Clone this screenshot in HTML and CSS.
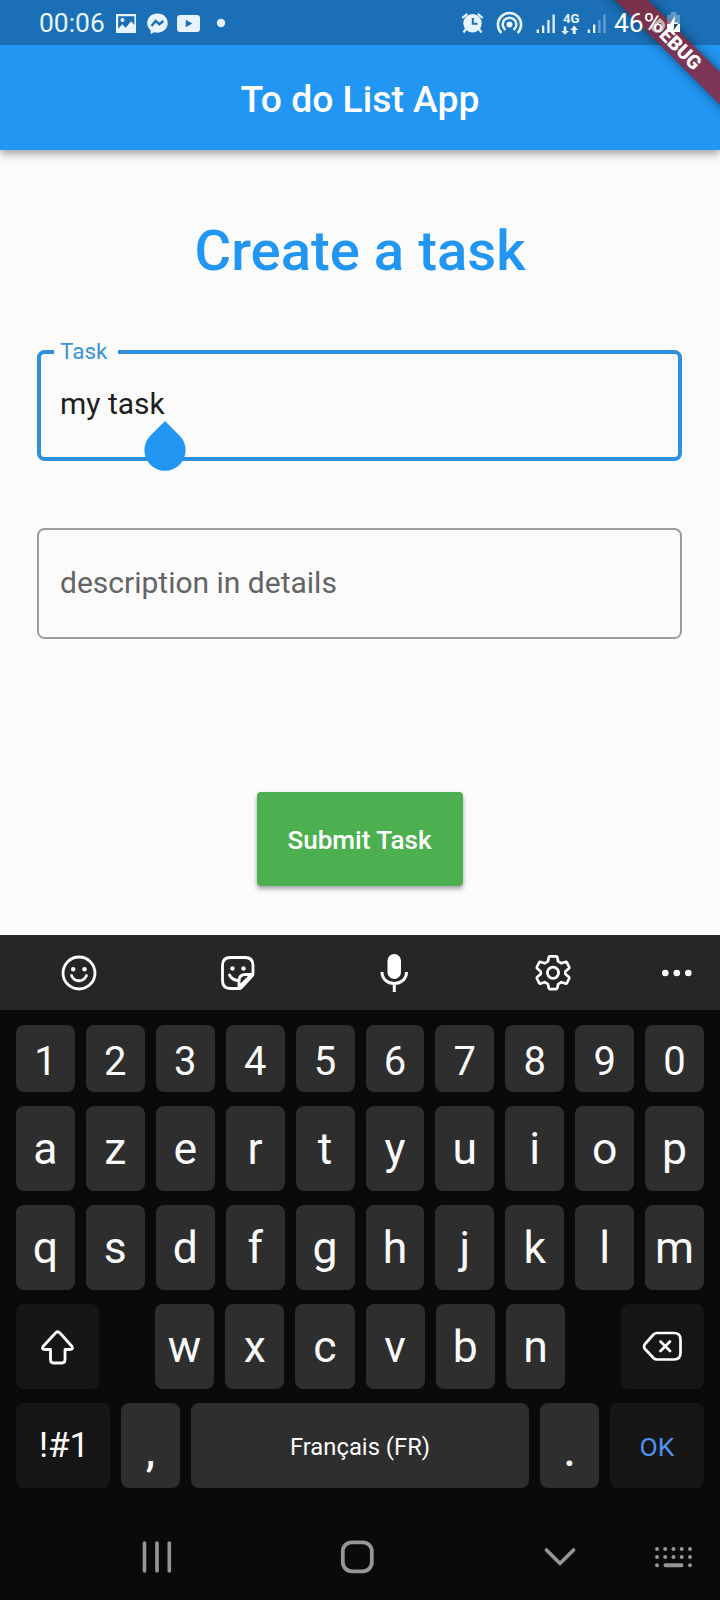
FILE: index.html
```html
<!DOCTYPE html>
<html lang="en">
<head>
<meta charset="utf-8">
<title>To do List App</title>
<link rel="stylesheet" href="styles.css">
</head>
<body>
<div class="phone">
  <header class="appbar">
    <h1 class="appbar-title">To do List App</h1>
  </header>
  <div class="banner-clip"><div class="banner"><span class="dim">D</span>EBUG</div></div>
  <div class="status">
    <span class="clock">00:06</span>
    <svg class="status-left" width="116" height="24" viewBox="112 10 116 24" fill="#e8f4fd">
      <path fill-rule="evenodd" d="M116 13h20v19h-20zM118.200 15.200v12.500l4-4.500 3.600 3.500 5.200-6.500 3.400 3.600v-8.600z"/>
      <circle cx="122.500" cy="19" r="2"/>
      <path d="M157.500 12.500c-6 0-10.300 4.200-10.300 9.600 0 3 1.300 5.500 3.400 7.300l.1 3.700 3.600-1.900c1 .3 2 .5 3.200.5 6 0 10.200-4.200 10.200-9.600s-4.200-9.600-10.200-9.600z"/>
      <path d="M151.500 25l4.200-5 3.600 3.200 4-3.200" fill="none" stroke="#1a6fb6" stroke-width="2.300"/>
      <path fill-rule="evenodd" d="M180 14q-3 0-3 3.500v10q0 3.500 3 3.500h17q3 0 3-3.500v-10q0-3.500-3-3.500zM185.800 18.800l6.400 3.700-6.400 3.700z"/>
      <circle cx="221" cy="22" r="4.200"/>
    </svg>
    <svg class="status-right" width="146" height="24" viewBox="460 10 146 24" fill="#e8f4fd">
      <circle cx="472.500" cy="22.200" r="9.200"/>
      <path d="M462.300 17l5-4.200M482.700 17l-5-4.200M466 28l-2.500 3.500M479 28l2.500 3.500" stroke="#e8f4fd" stroke-width="2.200"/>
      <path d="M472.800 17v5.800h4.600" fill="none" stroke="#1a6fb6" stroke-width="2"/>
      <circle cx="509.500" cy="23.500" r="3"/>
      <path d="M505.500 29a6.800 6.800 0 1 1 8 0M501.500 32a11.600 11.600 0 1 1 16 0" fill="none" stroke="#e8f4fd" stroke-width="2.600"/>
      <path d="M536.700 28.500h2.300V32h-2.300zM542 24.500h2.300V32H542zM547.300 19h2.300v13h-2.300zM552.500 13.500h2.300V32h-2.300z"/>
      <path d="M566.300 25.500v4.500h2.600l-3.900 3.800-3.900-3.800h2.600v-4.500zM572.700 33v-4h-2.400l3.900-4.500 3.900 4.500h-2.400V33z"/>
      <path d="M587.700 28.500h2.300V32h-2.300zM593 23.500h2.300V32H593z"/>
      <path d="M598.300 19h2.300v13h-2.300zM603.300 13.500h2.300V32h-2.300z" opacity=".38"/>
      <text class="net" x="563" y="22">4G</text>
    </svg>
    <span class="percent">46%</span>
    <svg class="battery" width="15" height="21" viewBox="0 0 15 21">
      <path d="M1 3h3.500V0h6v3H14v9H1z" fill="#fff" opacity=".3"/>
      <path d="M1 12h13v8H1z" fill="#fff"/>
      <path d="M9 4L3.500 12.500H8l-1 6 5.500-8H8.500z" fill="#fff"/>
      <path d="M8 12h4l-4.500 6.500.7-4.500z" fill="#16466f"/>
    </svg>
  </div>

  <main class="content">
    <h2 class="heading">Create a task</h2>
    <div class="field focused">
      <span class="label">Task</span>
      <span class="value">my task</span>
      <svg class="handle" width="42" height="50" viewBox="0 0 42 50"><path d="M21 0L35.500 14.500A20.600 20.600 0 1 1 6.500 14.500z" fill="#2196f3"/></svg>
    </div>
    <div class="field"><span class="hint">description in details</span></div>
    <button class="submit">Submit Task</button>
  </main>

  <section class="keyboard">
    <div class="tools">
      <svg width="38" height="38" viewBox="0 0 38 38" fill="none" stroke="#fff" stroke-width="2.800" stroke-linecap="round">
        <circle cx="19" cy="19" r="16"/><path d="M11.500 21.500c3 7 12 7 15 0"/>
        <g fill="#fff" stroke="none"><circle cx="13.200" cy="15.300" r="2.200"/><circle cx="24.500" cy="15.300" r="2.200"/></g>
      </svg>
      <svg width="38" height="38" viewBox="0 0 38 38" fill="none" stroke="#fff" stroke-width="2.800" stroke-linecap="round" stroke-linejoin="round">
        <path d="M21 34.500h-9.500q-8 0-8-8v-15q0-8 8-8H26q8 0 8 8V20q0 1-1 2L22.500 33.500q-.7 1-1.500 1zM20 33.500V27q0-6.500 6.500-6.500h7M10.500 21q2.500 5 8.500 5.500M22 31l9-9"/>
        <g fill="#fff" stroke="none"><circle cx="13.500" cy="14.500" r="2.200"/><circle cx="24.500" cy="14.500" r="2.200"/></g>
      </svg>
      <svg class="mic" width="38" height="40" viewBox="0 0 38 40">
        <rect x="12.500" y="1" width="13.500" height="25" rx="6.700" fill="#fff"/>
        <path d="M7 19c0 7 5.500 11.500 12.200 11.500S31.500 26 31.500 19M19.300 30.500V39" fill="none" stroke="#fff" stroke-width="3"/>
      </svg>
      <svg width="38" height="38" viewBox="0 0 38 38" fill="none" stroke="#fff" stroke-width="2.800" stroke-linejoin="round">
        <path transform="translate(.8 .5) scale(.96)" d="M15.700 2h6.600q1 0 1.200 1l.8 4.200 3.400 2 4.200-1.500q1-.3 1.500.5l2.400 4.800q.4 1-.3 1.600L31.800 17.800v2.400l3.700 3.200q.7.600.3 1.600l-2.400 4.800q-.5.800-1.500.5l-4.200-1.500-3.400 2-.8 4.200q-.2 1-1.200 1h-6.600q-1 0-1.200-1l-.8-4.200-3.400-2-4.200 1.500q-1 .3-1.500-.5L2.200 25q-.4-1 .3-1.600l3.700-3.200v-2.400l-3.700-3.200q-.7-.6-.3-1.600l2.400-4.800q.5-.8 1.500-.5l4.200 1.500 3.400-2 .8-4.200q.2-1 1.200-1z"/><circle cx="19" cy="18.700" r="5.600"/>
      </svg>
      <svg width="34" height="10" viewBox="0 0 34 10" fill="#fff"><circle cx="5.300" cy="5" r="3.300"/><circle cx="16.800" cy="5" r="3.300"/><circle cx="28.300" cy="5" r="3.300"/></svg>
    </div>
    <div class="keys">
      <div class="row digits"><kbd>1</kbd><kbd>2</kbd><kbd>3</kbd><kbd>4</kbd><kbd>5</kbd><kbd>6</kbd><kbd>7</kbd><kbd>8</kbd><kbd>9</kbd><kbd>0</kbd></div>
      <div class="row"><kbd>a</kbd><kbd>z</kbd><kbd>e</kbd><kbd>r</kbd><kbd>t</kbd><kbd>y</kbd><kbd>u</kbd><kbd>i</kbd><kbd>o</kbd><kbd>p</kbd></div>
      <div class="row"><kbd>q</kbd><kbd>s</kbd><kbd>d</kbd><kbd>f</kbd><kbd>g</kbd><kbd>h</kbd><kbd>j</kbd><kbd>k</kbd><kbd>l</kbd><kbd>m</kbd></div>
      <div class="row last-letters">
        <kbd class="dark"><svg width="36" height="36" viewBox="0 0 36 36" fill="none" stroke="#fff" stroke-width="2.800" stroke-linejoin="round"><path d="M15.500 4q2-2.500 4.500 0L32 17.500q1.500 3-2 3h-5v10q0 3.500-3 3.500h-8.500q-3 0-3-3.500v-10H5q-3.500 0-2-3z"/></svg></kbd>
        <div class="letters"><kbd>w</kbd><kbd>x</kbd><kbd>c</kbd><kbd>v</kbd><kbd>b</kbd><kbd>n</kbd></div>
        <kbd class="dark"><svg width="42" height="32" viewBox="0 0 42 32" fill="none" stroke="#fff" stroke-width="2.700" stroke-linejoin="round" stroke-linecap="round"><path d="M15 2h17q6.500 0 6.500 6.500v13.500q0 6.500-6.500 6.500H15q-2 0-3.500-1.500L3 18q-2-2.500 0-5l8.500-9.500Q13 2 15 2zM18.500 10.500l9.500 9.500M28 10.500l-9.500 9.500"/></svg></kbd>
      </div>
      <div class="row bottom">
        <kbd class="dark symbols">!#1</kbd><kbd class="punct">,</kbd><kbd class="space">Français (FR)</kbd><kbd class="punct">.</kbd><kbd class="dark ok">OK</kbd>
      </div>
    </div>
    <nav class="nav">
      <svg width="32" height="34" viewBox="0 0 32 34" stroke="#969696" stroke-width="3.600" stroke-linecap="round"><path d="M3.500 3v28M16 3v28M28.300 3v28"/></svg>
      <svg class="home" width="34" height="34" viewBox="0 0 34 34" fill="none" stroke="#969696" stroke-width="3.800"><rect x="2.800" y="2.300" width="29" height="29" rx="9"/></svg>
      <svg class="hide" width="32" height="20" viewBox="0 0 32 20" fill="none" stroke="#969696" stroke-width="3.600" stroke-linecap="round"><path d="M2.500 3L16 16.500 29.500 3"/></svg>
      <svg class="switch" width="40" height="22" viewBox="0 0 40 22" fill="none" stroke="#969696" stroke-width="4" stroke-linecap="round"><path d="M3 3h.01M11.200 3h.01M19.500 3h.01M27.700 3h.01M36 3h.01M3 11h.01M11.200 11h.01M19.500 11h.01M27.700 11h.01M36 11h.01M3 19.300h.01M36 19.300h.01M11.500 19.300h16"/></svg>
    </nav>
  </section>
</div>
</body>
</html>
```
FILE: styles.css
```css
* { box-sizing: border-box; }
body { margin: 0; font-family: Roboto, "Noto Sans", sans-serif; }
.phone { position: relative; width: 720px; height: 1600px; display: flex; flex-direction: column; overflow: hidden; background: #fbfbfb; }

.appbar { flex: none; height: 150px; display: flex; align-items: center; justify-content: center; border-top: 45px solid #1a6fb6; background: #2196f3; box-shadow: 0 4px 8px rgba(0, 0, 0, .35); z-index: 1; }
.appbar-title { margin: 0; padding-top: 3px; font-size: 37.3px; font-weight: 500; line-height: 44px; color: #fff; }

/* Corner ribbon, drawn under the system status icons */
.banner-clip { position: absolute; top: 0; right: 0; width: 150px; height: 150px; overflow: hidden; z-index: 2; }
.banner { position: absolute; left: 6px; top: 33px; width: 200px; height: 23px; transform: rotate(45deg); background: rgba(135, 40, 60, .87); box-shadow: 0 0 11px rgba(0, 0, 0, .5); color: #fff; font-size: 19.5px; font-weight: 900; line-height: 23px; text-align: center; }
.dim { color: #c3b9b9; }

.status { position: absolute; top: 0; left: 0; width: 720px; height: 45px; padding-left: 39px; display: flex; align-items: center; color: #e8f4fd; z-index: 3; }
.clock { width: 73px; font-size: 26.4px; line-height: 30px; }
.status-left { margin-right: 232px; }
.status-right { margin-right: 8px; }
.status svg { flex: none; }
.net { font-size: 13px; font-weight: 700; }
.percent { width: 51px; font-size: 26.4px; line-height: 30px; white-space: nowrap; color: #fff; }
.battery { margin-left: 1px; }

.content { flex: none; height: 785px; padding: 68px 37px 0; display: flex; flex-direction: column; align-items: center; }
.heading { margin: 0 0 66px; font-size: 56.25px; font-weight: 500; line-height: 66px; color: #2196f3; }
.field { position: relative; width: 645px; height: 111px; padding: 0 21px 2px; display: flex; align-items: center; align-self: flex-start; border: 2px solid #9c9c9c; border-radius: 7.5px; font-size: 30px; line-height: 36px; }
.field.focused { margin-bottom: 67px; padding: 0 19px 4px; border: 4px solid #2e90dc; }
.label { position: absolute; left: 13px; top: -17px; padding: 0 11px 0 6px; background: #fbfbfb; color: #3d93d4; font-size: 22.5px; line-height: 28px; }
.value { color: #1e1e1e; }
.hint { color: #646464; }
.handle { position: absolute; left: 103px; top: 67px; }
.submit { width: 206px; height: 94px; margin: 153px 0 0; padding: 2px 1px 0 0; border: 0; border-radius: 4px; background: #4caf50; box-shadow: 0 3px 5px rgba(0, 0, 0, .35); color: #fff; font: 500 26.1px/30px Roboto, sans-serif; }

.keyboard { flex: none; height: 665px; background: #0a0a0a; color: #fafafa; }
.tools { height: 75px; padding-top: 1px; background: #262626; display: grid; grid-template-columns: 157px 161px 152px 165px 84px; align-items: center; justify-items: center; }
.keys { padding: 15px 16px 0; display: flex; flex-direction: column; gap: 14px; }
.row { display: grid; grid-template-columns: repeat(10, 1fr); column-gap: 11px; height: 85px; }
.digits { height: 67px; }
kbd { display: flex; align-items: center; justify-content: center; border-radius: 8px; background: #2e2e2e; font: 400 44.5px/52px Roboto, sans-serif; }
.digits kbd { padding: 6px 0 0; font-size: 40px; }
kbd.dark { background: #161616; }
.last-letters { grid-template-columns: 83px 410px 83px; column-gap: 0; justify-content: space-between; }
.letters { display: grid; grid-template-columns: repeat(6, 1fr); column-gap: 11px; }
.bottom { grid-template-columns: 94px 59px 338px 59px 94px; }
kbd.symbols { padding: 1px 0 0 2px; font-size: 35px; }
kbd.space { padding-top: 2px; font-size: 23.8px; }
kbd.punct { padding-top: 12px; font-size: 42px; font-weight: 500; }
kbd.ok { padding-top: 2px; font-size: 26.5px; color: #4b93ee; }
.nav { height: 112px; padding: 25px 0 0 140.500px; display: flex; align-items: center; }
.home { margin-left: 167.500px; }
.hide { margin-left: 169.500px; }
.switch { margin-left: 78.500px; }
```
